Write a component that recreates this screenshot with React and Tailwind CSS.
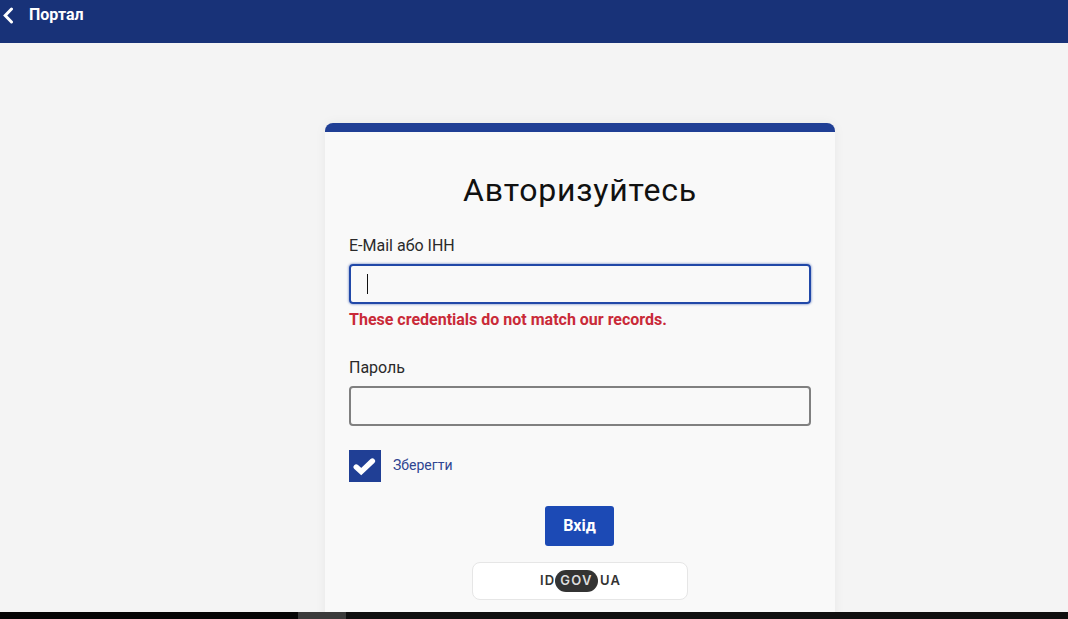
import React from "react";

function Check() {
  return (
    <svg width="23" height="19" viewBox="0 0 23 19" fill="none">
      <path d="M3.2 10 L8.2 14.6 L19.4 4" stroke="#fff" strokeWidth="5.4" strokeLinecap="round" strokeLinejoin="miter" />
    </svg>
  );
}

export default function App() {
  return (
    <div className="h-screen flex flex-col overflow-hidden bg-[#f4f4f4] font-['Roboto',sans-serif]">
      <header className="h-[43px] shrink-0 bg-[#183278] flex items-start">
        <div className="flex items-center h-[30px] pl-[2px]">
          <svg width="12" height="17" viewBox="0 0 12 17" fill="none">
            <path d="M9.5 2 L3.2 8.5 L9.5 15" stroke="#fff" strokeWidth="3" strokeLinecap="round" strokeLinejoin="miter" />
          </svg>
          <span className="ml-[15px] text-white text-[16px] font-bold leading-none">Портал</span>
        </div>
      </header>
      <main className="flex-1 min-h-0 overflow-hidden pl-[325px] pt-[80px]">
        <section className="w-[510px] bg-[#f9f9f9] rounded-t-[8px] border-t-[9px] border-[#203f95] shadow-[0_0_12px_rgba(0,0,0,0.05)] px-[24px] h-[600px]">
          <h1 className="text-[32px] leading-[40px] text-center text-[#111] font-normal tracking-[0.8px] mt-[38px]">Авторизуйтесь</h1>
          <label className="block text-[16px] leading-[20px] text-[#2a2a2a] mt-[26px]">E-Mail або ІНН</label>
          <div className="mt-[8px] h-[40px] rounded-[4px] border-2 border-[#2148a8] shadow-[0_0_2px_1px_rgba(33,72,168,0.35)] flex items-center pl-[16px]">
            <span className="w-px h-[20px] bg-[#111]"></span>
          </div>
          <p className="mt-[6px] text-[16px] leading-[20px] font-bold text-[#c92a38]">These credentials do not match our records.</p>
          <label className="block text-[16px] leading-[20px] text-[#2a2a2a] mt-[28px]">Пароль</label>
          <div className="mt-[8px] h-[40px] rounded-[4px] border-2 border-[#808080]"></div>
          <div className="flex items-center mt-[24px]">
            <span className="w-[32px] h-[32px] bg-[#203f95] flex items-center justify-center pr-[1px]">
              <Check />
            </span>
            <span className="ml-[12px] mb-[2px] text-[14px] text-[#2f4591]">Зберегти</span>
          </div>
          <div className="flex justify-center mt-[24px] pr-px">
            <button className="w-[69px] h-[40px] rounded-[3px] bg-[#1c4ab5] text-white text-[16px] font-bold">Вхід</button>
          </div>
          <div className="flex justify-center mt-[16px]">
            <div className="w-[216px] h-[38px] bg-white rounded-[8px] border border-[#e6e6e6] flex items-center justify-center text-[13px] tracking-[1.2px] font-['Inter',sans-serif] font-semibold text-[#333]">
              <span className="w-[15px]">ID</span>
              <span className="h-[22px] w-[43px] rounded-full bg-[#333] text-[#ddd] flex items-center justify-center">GOV</span>
              <span className="w-[22px] pl-[2px]">UA</span>
            </div>
          </div>
        </section>
      </main>
      <footer className="h-[7px] shrink-0 bg-[#0a0a0a] flex relative">
        <div className="w-[298px] bg-[#050505]"></div>
        <div className="w-[48px] bg-[#3a3a3a]"></div>
        <div className="flex-1 bg-[#0f0f0f]"></div>
      </footer>
    </div>
  );
}
